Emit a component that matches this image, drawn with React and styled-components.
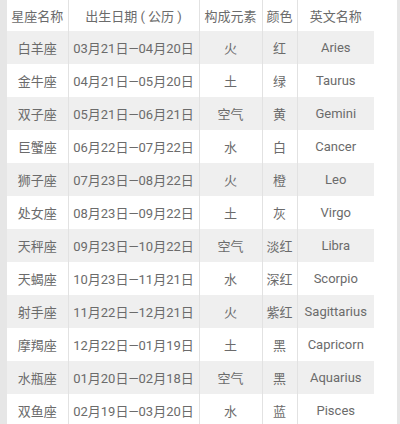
import React from 'react';
import styled, { createGlobalStyle } from 'styled-components';

const GlobalStyle = createGlobalStyle`
  html, body {
    margin: 0;
    padding: 0;
    background: #e6e6e6;
  }
`;

const Page = styled.div`
  width: 400px;
  height: 424px;
  overflow: hidden;
  display: flex;
  padding-left: 7px;
  box-sizing: border-box;
  background: #e6e6e6;
`;

const Card = styled.div`
  width: 390px;
  background: #fff;
`;

const Table = styled.table`
  width: 367px;
  border-collapse: collapse;
  table-layout: fixed;
  font-family: Roboto, "Noto Sans CJK SC", sans-serif;
  font-size: 13px;
  color: #6b6b6b;
`;

const Row = styled.tr`
  height: ${p => (p.$head ? 31 : 33)}px;
  background: ${p => (p.$shaded ? '#efefef' : '#fff')};
`;

const Cell = styled.td`
  text-align: center;
  padding: 0;
  white-space: nowrap;
  border-left: 1px solid #e2e2e2;
  &:first-child {
    border-left: none;
  }
`;

const widths = [61, 131, 63, 35, 77];

const rows = [
  ['白羊座', '03月21日—04月20日', '火', '红', 'Aries'],
  ['金牛座', '04月21日—05月20日', '土', '绿', 'Taurus'],
  ['双子座', '05月21日—06月21日', '空气', '黄', 'Gemini'],
  ['巨蟹座', '06月22日—07月22日', '水', '白', 'Cancer'],
  ['狮子座', '07月23日—08月22日', '火', '橙', 'Leo'],
  ['处女座', '08月23日—09月22日', '土', '灰', 'Virgo'],
  ['天秤座', '09月23日—10月22日', '空气', '淡红', 'Libra'],
  ['天蝎座', '10月23日—11月21日', '水', '深红', 'Scorpio'],
  ['射手座', '11月22日—12月21日', '火', '紫红', 'Sagittarius'],
  ['摩羯座', '12月22日—01月19日', '土', '黑', 'Capricorn'],
  ['水瓶座', '01月20日—02月18日', '空气', '黑', 'Aquarius'],
  ['双鱼座', '02月19日—03月20日', '水', '蓝', 'Pisces'],
];

const head = ['星座名称', '出生日期 ( 公历 )', '构成元素', '颜色', '英文名称'];

export default function App() {
  return (
    <Page>
      <GlobalStyle />
      <Card>
        <Table>
          <colgroup>
            {widths.map((w, i) => <col key={i} style={{ width: w }} />)}
          </colgroup>
          <tbody>
            <Row $head>
              {head.map(h => <Cell key={h}>{h}</Cell>)}
            </Row>
            {rows.map((r, i) => (
              <Row key={r[0]} $shaded={i % 2 === 0}>
                {r.map((c, j) => <Cell key={j}>{c}</Cell>)}
              </Row>
            ))}
          </tbody>
        </Table>
      </Card>
    </Page>
  );
}
